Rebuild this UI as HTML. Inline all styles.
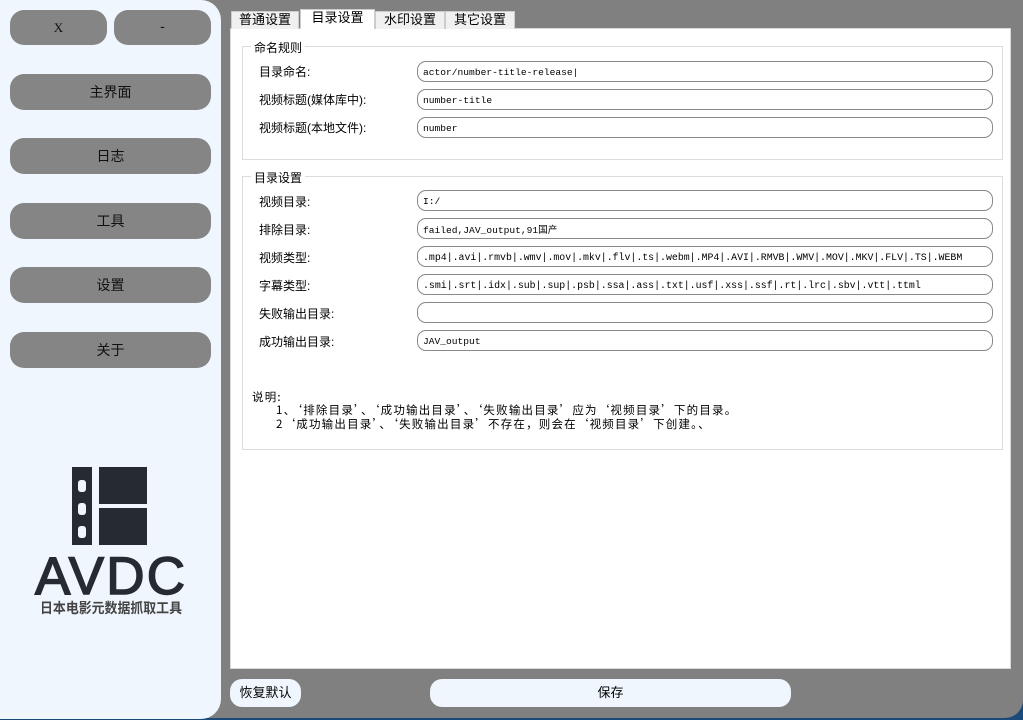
<!DOCTYPE html>
<html><head><meta charset="utf-8"><style>
*{margin:0;padding:0;box-sizing:border-box}
body{width:1023px;height:720px;background:#1a4a7a;overflow:hidden;font-family:"Liberation Sans","Noto Sans CJK SC",sans-serif;font-size:12px;color:#000;position:relative}
.win{position:absolute;left:0;top:0;width:1023px;height:718px;background:#808080;border-radius:0 0 18px 0}
.left{position:absolute;left:0;top:0;width:221px;height:719px;background:#eff6fd;border-radius:0 20px 20px 0}
.btn{position:absolute;background:#858585;border-radius:14px;text-align:center;font-size:14px;color:#111}
.main{position:absolute;left:230px;top:28px;width:781px;height:641px;background:#fff;border:1px solid #d8d8d8}
.tab{position:absolute;top:11px;height:18px;background:#f0f0f0;border:1px solid #ccc;border-bottom:none;font-size:13px;text-align:center;line-height:16px}
.tab.act{background:#fff;top:9px;height:20px}
.grp{position:absolute;left:242px;width:761px;border:1px solid #dcdcdc}
.gt{position:absolute;top:-8px;left:8px;background:#fff;padding:0 3px;font-size:12px}
.lab{position:absolute;left:259px;font-size:12px}
.inp{position:absolute;left:417px;width:576px;height:21px;border:1px solid #888;border-radius:9px;font-family:"Liberation Mono","Noto Sans CJK SC",monospace;font-size:9.6px;display:flex;align-items:center;padding-left:5px;padding-top:1px;white-space:nowrap;overflow:hidden}
.note{position:absolute;font-size:11.5px;white-space:nowrap;font-family:"Noto Sans CJK SC",sans-serif;line-height:14px;letter-spacing:1.2px}
</style></head><body>
<div class="win"></div>
<div class="left"></div>
<div class="btn" style="left:10px;top:10px;width:97px;height:35px;line-height:35px;font-family:'Liberation Serif',serif;font-size:13px">X</div>
<div class="btn" style="left:114px;top:10px;width:97px;height:35px;line-height:33px">-</div>
<div class="btn" style="left:10px;top:74px;width:201px;height:36px;line-height:36px">主界面</div>
<div class="btn" style="left:10px;top:138px;width:201px;height:36px;line-height:36px">日志</div>
<div class="btn" style="left:10px;top:203px;width:201px;height:36px;line-height:36px">工具</div>
<div class="btn" style="left:10px;top:267px;width:201px;height:36px;line-height:36px">设置</div>
<div class="btn" style="left:10px;top:332px;width:201px;height:36px;line-height:36px">关于</div>
<svg style="position:absolute;left:0;top:440px" width="220" height="200">
<rect x="72" y="27" width="20" height="78" fill="#262b33"/>
<rect x="78" y="40" width="8" height="12" rx="3" fill="#eff6fd"/>
<rect x="78" y="63" width="8" height="12" rx="3" fill="#eff6fd"/>
<rect x="78" y="86" width="8" height="12" rx="3" fill="#eff6fd"/>
<rect x="99" y="27" width="48" height="37" fill="#262b33"/>
<rect x="99" y="68" width="48" height="37" fill="#262b33"/>
<text x="110" y="154" text-anchor="middle" font-family="Liberation Sans,sans-serif" font-size="53" fill="#262b33" stroke="#262b33" stroke-width="1.5" textLength="150">AVDC</text>
<text x="111" y="173" text-anchor="middle" font-family="Noto Sans CJK SC,sans-serif" font-size="14" font-weight="bold" fill="#444" textLength="142" lengthAdjust="spacingAndGlyphs">日本电影元数据抓取工具</text>
</svg>
<div class="main"></div>
<div class="tab" style="left:231px;width:68px">普通设置</div>
<div class="tab" style="left:375px;width:70px">水印设置</div>
<div class="tab" style="left:445px;width:70px">其它设置</div>
<div class="tab act" style="left:300px;width:75px;border-color:#ccc">目录设置</div>
<div class="grp" style="top:46px;height:114px"><div class="gt">命名规则</div></div>
<div class="grp" style="top:176px;height:274px"><div class="gt">目录设置</div></div>
<div class="lab" style="top:63px">目录命名:</div><div class="inp" style="top:61px">actor/number-title-release|</div>
<div class="lab" style="top:91px">视频标题(媒体库中):</div><div class="inp" style="top:89px">number-title</div>
<div class="lab" style="top:119px">视频标题(本地文件):</div><div class="inp" style="top:117px">number</div>
<div class="lab" style="top:193px">视频目录:</div><div class="inp" style="top:190px">I:/</div>
<div class="lab" style="top:221px">排除目录:</div><div class="inp" style="top:218px">failed,JAV_output,91国产</div>
<div class="lab" style="top:249px">视频类型:</div><div class="inp" style="top:246px;font-size:9.9px">.mp4|.avi|.rmvb|.wmv|.mov|.mkv|.flv|.ts|.webm|.MP4|.AVI|.RMVB|.WMV|.MOV|.MKV|.FLV|.TS|.WEBM</div>
<div class="lab" style="top:277px">字幕类型:</div><div class="inp" style="top:274px;font-size:9.9px">.smi|.srt|.idx|.sub|.sup|.psb|.ssa|.ass|.txt|.usf|.xss|.ssf|.rt|.lrc|.sbv|.vtt|.ttml</div>
<div class="lab" style="top:305px">失败输出目录:</div><div class="inp" style="top:302px"></div>
<div class="lab" style="top:333px">成功输出目录:</div><div class="inp" style="top:330px">JAV_output</div>
<div class="note" style="left:252px;top:390px">说明:</div>
<div class="note" style="left:276px;top:403px">1、‘排除目录’、‘成功输出目录’、‘失败输出目录’应为‘视频目录’下的目录。</div>
<div class="note" style="left:276px;top:417px">2‘成功输出目录’、‘失败输出目录’不存在，则会在‘视频目录’下创建。、</div>
<div style="position:absolute;left:230px;top:679px;width:71px;height:28px;background:#eff6fd;border-radius:12px;text-align:center;line-height:28px;font-size:13px">恢复默认</div>
<div style="position:absolute;left:430px;top:679px;width:361px;height:28px;background:#eff6fd;border-radius:12px;text-align:center;line-height:28px;font-size:13px">保存</div>
</body></html>
